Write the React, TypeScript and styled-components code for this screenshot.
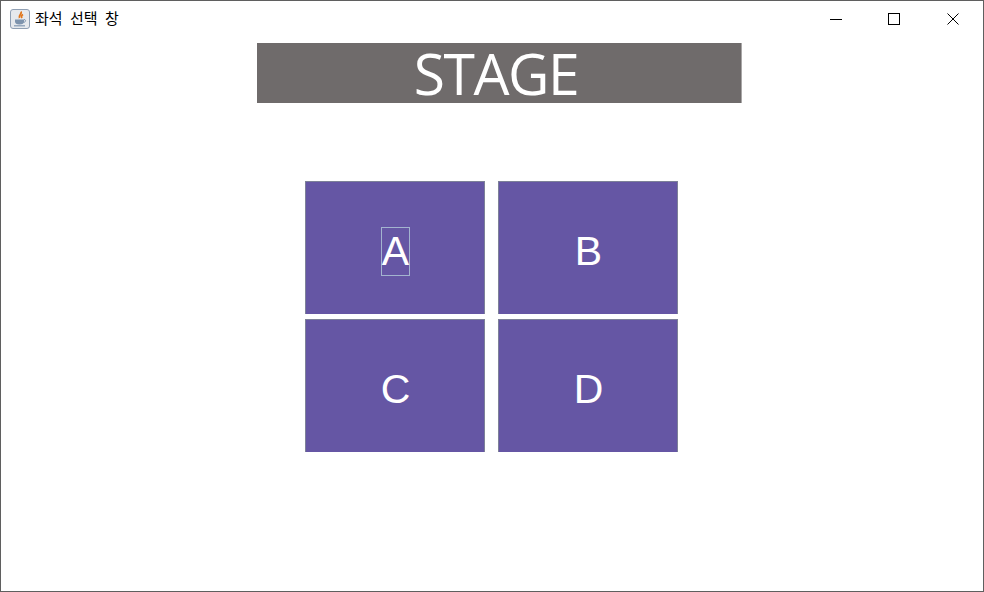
import styled, { createGlobalStyle } from 'styled-components'

const GlobalStyle = createGlobalStyle`
  html, body {
    margin: 0;
    padding: 0;
    background: #fff;
  }
`

const Window = styled.div`
  box-sizing: border-box;
  width: 984px;
  height: 592px;
  border: 1px solid #5f5f5f;
  background: #fff;
  overflow: hidden;
`

const TitleBar = styled.header`
  display: flex;
  align-items: center;
  height: 36px;
  padding: 0 2px 0 9px;
`

const AppIcon = styled.svg`
  width: 20px;
  height: 20px;
  flex: none;
`

const Title = styled.span`
  flex: 1;
  margin-left: 5px;
  padding-bottom: 2px;
  font: 15px/20px "Noto Sans CJK KR", "Noto Sans", sans-serif;
  word-spacing: 4px;
  color: #000;
`

const WindowButton = styled.button`
  display: flex;
  align-items: center;
  justify-content: center;
  width: 58px;
  height: 36px;
  padding: 0;
  border: 0;
  background: transparent;
`

const CloseButton = styled(WindowButton)`
  padding-left: 2px;
`

const Stage = styled.div`
  box-sizing: border-box;
  width: 485px;
  height: 60px;
  margin: 6px 0 0 256px;
  padding-right: 6px;
  border-right: 1px solid #a9a7a7;
  background: #6f6b6b;
  color: #fff;
  font: 57px/60px "Open Sans", sans-serif;
  letter-spacing: -1.5px;
  text-align: center;
`

const SeatGrid = styled.div`
  display: grid;
  grid-template-columns: 180px 180px;
  grid-template-rows: 133px 133px;
  column-gap: 13px;
  row-gap: 5px;
  width: 373px;
  margin: 78px 0 0 304px;
`

const Seat = styled.button`
  box-sizing: border-box;
  display: flex;
  align-items: center;
  justify-content: center;
  padding: 0;
  border: 1px solid #7d8198;
  border-bottom: 0;
  background: #6556a4;
  color: #fff;
  font: 41px "Liberation Sans", Arial, sans-serif;
`

const SeatLabel = styled.span<{ $focused?: boolean }>`
  box-sizing: border-box;
  display: flex;
  align-items: center;
  justify-content: center;
  width: 29px;
  height: 49px;
  margin-top: 7px;
  padding-left: 1px;
  border: 1px solid ${({ $focused }) => ($focused ? '#a3b4cf' : 'transparent')};
`

const seats = ['A', 'B', 'C', 'D']

export default function App() {
  return (
    <Window>
      <GlobalStyle />
      <TitleBar>
        <AppIcon viewBox="0 0 20 20">
          <rect x="0.5" y="0.5" width="19" height="19" rx="2.5" fill="#e6e9ed" stroke="#8f9fb3" />
          <path d="M11 2.500c1.500 2.500-3 3.500-1.500 6.500M13 5.500c-1.500 1-2 2-1 3.500" fill="none" stroke="#e0761c" strokeWidth="1.800" />
          <path d="M5 10.500h9v2c0 2-1.500 3-4.500 3S5 14.500 5 12.500z" fill="#7d93ad" />
          <path d="M14 10.500c2.200 0 2.200 2.500-.5 3" fill="none" stroke="#7d93ad" />
          <path d="M4 16.800h11" stroke="#8298b2" strokeWidth="1.200" />
        </AppIcon>
        <Title>좌석 선택 창</Title>
        <WindowButton aria-label="minimize">
          <svg width="12" height="12" viewBox="0 0 12 12">
            <path d="M0 6.500h12" stroke="#000" fill="none" />
          </svg>
        </WindowButton>
        <WindowButton aria-label="maximize">
          <svg width="12" height="12" viewBox="0 0 12 12">
            <rect x="0.5" y="0.5" width="11" height="11" stroke="#000" fill="none" />
          </svg>
        </WindowButton>
        <CloseButton aria-label="close">
          <svg width="12" height="12" viewBox="0 0 12 12">
            <path d="M0.500 0.500l11 11M11.500 0.500l-11 11" stroke="#000" fill="none" />
          </svg>
        </CloseButton>
      </TitleBar>
      <Stage>STAGE</Stage>
      <SeatGrid>
        {seats.map((seat) => (
          <Seat key={seat}>
            <SeatLabel $focused={seat === 'A'}>{seat}</SeatLabel>
          </Seat>
        ))}
      </SeatGrid>
    </Window>
  )
}
